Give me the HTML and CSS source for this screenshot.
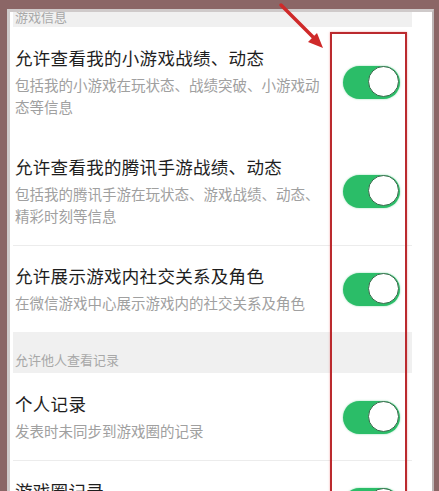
FILE: index.html
```html
<!DOCTYPE html>
<html lang="zh">
<head>
<meta charset="utf-8">
<link rel="stylesheet" href="styles.css">
</head>
<body>
<div class="frame">
  <div class="screen">
    <div class="content">
      <div class="section top">游戏信息</div>
      <div class="row">
        <div class="text">
          <div class="title">允许查看我的小游戏战绩、动态</div>
          <div class="sub">包括我的小游戏在玩状态、战绩突破、小游戏动态等信息</div>
        </div>
        <span class="toggle"></span>
      </div>
      <div class="row line">
        <div class="text">
          <div class="title">允许查看我的腾讯手游战绩、动态</div>
          <div class="sub">包括我的腾讯手游在玩状态、游戏战绩、动态、精彩时刻等信息</div>
        </div>
        <span class="toggle"></span>
      </div>
      <div class="row">
        <div class="text">
          <div class="title">允许展示游戏内社交关系及角色</div>
          <div class="sub">在微信游戏中心展示游戏内的社交关系及角色</div>
        </div>
        <span class="toggle"></span>
      </div>
      <div class="section">允许他人查看记录</div>
      <div class="row line">
        <div class="text">
          <div class="title">个人记录</div>
          <div class="sub">发表时未同步到游戏圈的记录</div>
        </div>
        <span class="toggle"></span>
      </div>
      <div class="row">
        <div class="text">
          <div class="title">游戏圈记录</div>
          <div class="sub">发表时同步到游戏圈的记录</div>
        </div>
        <span class="toggle"></span>
      </div>
    </div>
  </div>
  <div class="redbox"></div>
  <svg class="arrow" width="60" height="60" viewBox="0 0 60 60">
    <line x1="3" y1="5" x2="40" y2="42" stroke="#cf2a2a" stroke-width="3.5" stroke-linecap="round"/>
    <polygon points="45,48 30,42 39,33" fill="#cf2a2a"/>
  </svg>
</div>
</body>
</html>
```
FILE: styles.css
```css
html, body {
  margin: 0;
  padding: 0;
  height: 100%;
  overflow: hidden;
}
body {
  background: #8b6666;
  font-family: "Noto Sans CJK SC", "Noto Sans", sans-serif;
}
.frame {
  position: relative;
  padding: 9px 5px 0 7px;
  height: 100%;
  box-sizing: border-box;
}
.screen {
  background: #fff;
  border-left: 3px solid #cfcaca;
  border-top: 3px solid #cfcaca;
  border-right: 2px solid #bdb6b6;
  height: 100%;
  box-sizing: border-box;
  padding-left: 3px;
  overflow: hidden;
}
.content {
  width: 399px;
}
.section {
  background: #f0f0f0;
  color: #a8a8a8;
  font-size: 13px;
  line-height: 18px;
  padding: 19px 0 4px 2px;
}
.section.top {
  padding: 0 0 0 2px;
  height: 15px;
  line-height: 10px;
  overflow: hidden;
}
.row {
  display: flex;
  align-items: center;
  padding: 19px 0 18px 2px;
}
.row.line {
  border-bottom: 1px solid #ececec;
  margin-bottom: -1px;
}
.text {
  flex: 1;
  min-width: 0;
  padding-right: 12px;
}
.title {
  color: #1e1e1e;
  font-size: 17.5px;
  line-height: 24px;
  letter-spacing: 0.3px;
}
.sub {
  color: #a0a0a0;
  font-size: 14.5px;
  line-height: 22px;
  margin-top: 4px;
  width: 312px;
}
.toggle {
  position: relative;
  flex: none;
  width: 57px;
  height: 33px;
  border-radius: 17px;
  background: #2bbd68;
  margin-right: 12px;
  box-shadow: 0 0 2px rgba(43, 189, 104, 0.6);
}
.toggle::after {
  content: "";
  position: absolute;
  right: 1px;
  top: 1px;
  width: 29px;
  height: 29px;
  border-radius: 50%;
  background: #fff;
  border: 1.5px solid #3a6a4c;
  box-sizing: content-box;
  top: 0;
}
.redbox {
  position: absolute;
  left: 330px;
  top: 32px;
  width: 73px;
  height: 480px;
  border: 2px solid #bb2a2e;
  box-shadow: 0 0 2px rgba(230, 80, 80, 0.5);
}
.arrow {
  position: absolute;
  left: 278px;
  top: 0;
}
```
